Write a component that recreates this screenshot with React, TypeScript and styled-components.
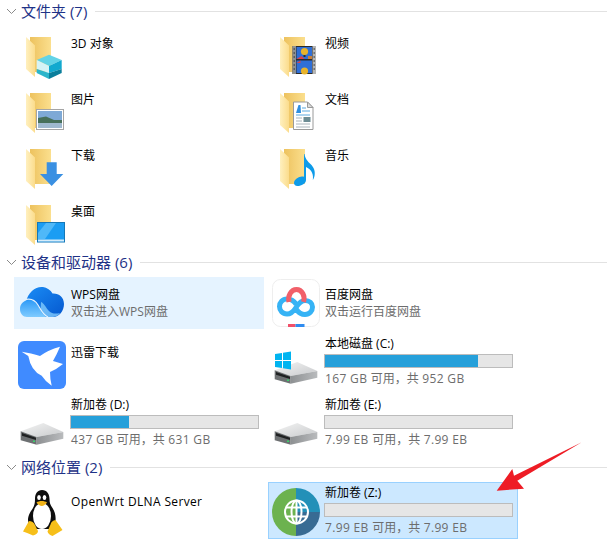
import React from 'react';
import styled, { createGlobalStyle } from 'styled-components';

const GlobalStyle = createGlobalStyle`
  html, body {
    margin: 0;
    padding: 0;
    background: #fff;
  }
  body {
    font-family: "Open Sans", "Noto Sans CJK SC", sans-serif;
    font-size: 12px;
    color: #000;
    overflow: hidden;
  }
`;

/* ------------------------------ Folder icons ------------------------------ */
const FolderBase = () => (
  <>
    <defs>
      <linearGradient id="back" x1="0" y1="0" x2="1" y2="0">
        <stop offset="0" stopColor="#edc25e" />
        <stop offset="1" stopColor="#fbdf8e" />
      </linearGradient>
      <linearGradient id="flap" x1="0" y1="0" x2="1" y2="0">
        <stop offset="0" stopColor="#fff0bf" />
        <stop offset="1" stopColor="#fbdc8c" />
      </linearGradient>
    </defs>
    <rect x="12" y="4" width="21" height="35" fill="url(#back)" />
    <polygon points="8,4 17,12.5 17,44 8,36" fill="url(#flap)" />
  </>
);

const Cube = () => (
  <>
    <polygon points="31,21.7 43.7,27 31,33 18.7,27" fill="#62d3e6" />
    <polygon points="18.7,27 31,33 31,40 18.7,36" fill="#d5f3f6" />
    <polygon points="18.7,36 31,40 31,46 18.7,40" fill="#2bb5cb" />
    <polygon points="31,33 43.7,27 43.7,36 31,40" fill="#12a9cf" />
    <polygon points="31,40 43.7,36 43.7,40 31,46" fill="#0b7f9c" />
  </>
);

const Film = () => (
  <>
    <rect x="20.5" y="13" width="23.5" height="28" fill="#2b2b2b" />
    <rect x="20.5" y="13" width="3.5" height="28" fill="#8f9191" />
    <rect x="40.5" y="13" width="3.5" height="28" fill="#b5b6b6" />
    <path d="M21.5 16h1.500M21.5 20h1.500M21.5 24h1.500M21.5 28h1.500M21.5 32h1.500M21.5 36h1.500M41.5 16h1.500M41.5 20h1.500M41.5 24h1.500M41.5 28h1.500M41.5 32h1.500M41.5 36h1.500" stroke="#2b2b2b" />
    <rect x="24.5" y="14" width="15.5" height="12" fill="#2f6fd6" />
    <rect x="24.5" y="27.5" width="15.5" height="12.5" fill="#2f6fd6" />
    <circle cx="32.5" cy="18.500" r="3.600" fill="#e8b32a" />
    <rect x="31.5" y="22" width="2" height="2" fill="#2b2b2b" />
    <circle cx="32.5" cy="38" r="3.600" fill="#e8b32a" />
    <path d="M24.500 26l5-3 3 3zM24.500 30l4-2.500v2.500z" fill="#d8424a" />
    <rect x="36" y="23" width="4" height="3" fill="#c9803a" />
  </>
);

const Picture = () => (
  <>
    <rect x="18.5" y="20.5" width="27" height="20" fill="#fff" stroke="#a5a5a5" />
    <rect x="20" y="22" width="24" height="17" fill="#7ea9d6" />
    <polygon points="20,29 28,27.5 36,31 44,31 44,34 20,34" fill="#47705a" />
    <rect x="20" y="34" width="24" height="5" fill="#9fb9cf" />
  </>
);

const Doc = () => (
  <>
    <polygon points="21.5,13 35.5,13 41,18.5 41,40.5 21.5,40.5" fill="#fff" stroke="#9a9a9a" />
    <polygon points="35.5,13 35.5,18.5 41,18.5" fill="#dcdcdc" stroke="#9a9a9a" />
    <polygon points="24,24 26.5,16 28.5,16 29,24" fill="#2f8fe0" />
    <path d="M30 19h4M30 22h8M24 26h14" stroke="#5aa9e0" fill="none" />
    <path d="M24 29h6M24 32h6M24 35h14M24 38h14" stroke="#aab4bc" fill="none" />
    <rect x="31.5" y="28" width="7" height="5" fill="#6d8c94" />
  </>
);

const Note = () => (
  <path
    d="M30 9h2.5c.8 5 3 7 6 10 3.500 3.500 5 7 4 12-.3 1.500-1 3-1.700 4 .8-5-.5-10-6.800-13V35c0 3.500-4.500 6-8.500 6-2.500 0-3.500-1.500-3.500-3 0-3.500 4.500-6.500 8-6.500.8 0 1.500.1 2 .3V9z"
    fill="#0d9be9"
  />
);

const DownArrow = () => (
  <polygon
    points="28.700,17.300 38.700,17.300 38.700,29 45.300,29 33.700,41 22,29 28.700,29"
    fill="#3a90e2"
  />
);

const Desktop = () => (
  <>
    <rect x="19.500" y="21.500" width="27" height="19.500" fill="#1b9df3" stroke="#1578b8" />
    <polygon points="28,22 38,22 27,38 20,38 20,32" fill="#4fb8f8" />
    <rect x="20" y="38.500" width="26" height="2" fill="#d6ecfa" />
  </>
);

/* ------------------------------ Device icons ------------------------------ */
const WpsIcon = () => (
  <svg width="48" height="48" viewBox="0 0 48 48">
    <defs>
      <linearGradient id="wpsBack" x1="0" y1="0" x2="1" y2="1">
        <stop offset="0" stopColor="#1a8cf5" />
        <stop offset="1" stopColor="#0558cf" />
      </linearGradient>
      <linearGradient id="wpsFront" x1="0" y1="0" x2="0" y2="1">
        <stop offset="0" stopColor="#2f9bf7" />
        <stop offset="1" stopColor="#7fcbff" />
      </linearGradient>
    </defs>
    <path
      d="M8 23C10 13 18 7 25 8c4 .5 7.500 3 9.500 6.500 6-.5 11.500 3.500 11.500 10.500 0 7-5 13-11 13H22C20 30 14 24 8 23z"
      fill="url(#wpsBack)"
    />
    <path
      d="M2 30c0-6 5-9.500 10-9 5 .5 8 5 10.500 10 1.500 3 3.500 5.500 6 7H9c-4 0-7-3.500-7-8z"
      fill="url(#wpsFront)"
    />
    <path d="M22.500 31C25 36 27.500 38 30 38h5c4-1 6-2 7-4-4 1-8 1-11-2-3-3-5-8-8-9z" fill="#8ad2ff" opacity="0.75" />
    <path d="M6 21c6-2 11 0 14 5 2.500 4 5 10 10 12" stroke="#e3f3ff" strokeWidth="1.200" fill="none" />
  </svg>
);

const XunleiIcon = () => (
  <svg width="48" height="48" viewBox="0 0 48 48">
    <rect width="48" height="48" rx="6" fill="#408bff" />
    <path
      d="M3.700 10.700L13 12.500Q18 13.500 22 15Q30 9 42 5.700Q39 13 35 20L45 23Q39 28 32 31Q32 38 33.700 44.700Q27 40 23.700 34.700Q13 30 10.300 15Z"
      fill="#fff"
    />
  </svg>
);

const BaiduIcon = () => (
  <svg width="48" height="48" viewBox="0 0 48 48">
    <rect x="0.500" y="0.500" width="47" height="47" rx="8" fill="#fff" stroke="#eeeeee" />
    <g fill="none" strokeWidth="5">
      <path d="M24 25c-2-3-5-5-9-5-4.500 0-7.500 3.500-7.500 7.500s3 7.500 7.500 7.500c5 0 8-5 9-6.500 1.500-2 4-7 9-7 4.500 0 7.500 3 7.500 6.500 0 4-3 7.500-7.500 7.500-3.500 0-6.500-2-8.500-5" stroke="#36b3f5" />
      <path d="M17 23c-1.500-6 2-12.500 7.500-12.500S33.500 17 31.500 23" stroke="#f1606a" />
    </g>
    <rect x="16" y="45" width="7.500" height="3" fill="#f1506a" />
    <rect x="23.500" y="45" width="9" height="3" fill="#2e8cf0" />
  </svg>
);

const Hdd = () => (
  <g>
    <defs>
      <linearGradient id="hddTop" x1="0" y1="0" x2="1" y2="1">
        <stop offset="0" stopColor="#f4f4f4" />
        <stop offset="1" stopColor="#c8cacc" />
      </linearGradient>
      <linearGradient id="hddSide" x1="0" y1="0" x2="1" y2="0">
        <stop offset="0" stopColor="#8d9092" />
        <stop offset="1" stopColor="#b9bbbd" />
      </linearGradient>
    </defs>
    <polygon points="2.700,31.300 25.300,23 45.300,32 18.700,37" fill="url(#hddTop)" />
    <polygon points="2.700,31.300 18.700,37 18.700,44.700 2.700,40.300" fill="#6d7072" />
    <polygon points="4,33 18,37.800 18,40 4,35.800" fill="#1f2122" />
    <polygon points="18.700,37 45.300,32 45.300,38.700 18.700,44.700" fill="url(#hddSide)" />
    <rect x="15" y="40.500" width="2" height="1.500" fill="#38d46a" />
  </g>
);

const DriveIcon = ({ system }: { system?: boolean }) => (
  <svg width="48" height="48" viewBox="0 0 48 48">
    <Hdd />
    {system && (
      <path d="M3 15l7-1v7H3zM11 13.800l8-1.300V21h-8zM3 22h7v7l-7-1zM11 22h8v8.500l-8-1.300z" fill="#00b4f0" />
    )}
  </svg>
);

const PenguinIcon = () => (
  <svg width="48" height="48" viewBox="0 0 48 48">
    <path
      d="M24 0c5 0 7.500 4 7.500 9 0 4 1 6 3 9 2.500 4 3.500 8 3 13-.3 3-2 6-4 8H14c-2-2-4-5-4-9 0-5 3-9 5-12 1.500-2.500 2-5 2-9 0-5.500 2.500-9 7-9z"
      fill="#0e0e0e"
    />
    <ellipse cx="24" cy="26" rx="9" ry="13" fill="#fff" />
    <ellipse cx="21" cy="7.500" rx="1.800" ry="2.500" fill="#fff" />
    <ellipse cx="26.500" cy="7.500" rx="1.800" ry="2.500" fill="#fff" />
    <path d="M18.500 12.500c2.500-2 8-2 10.500 0-1.500 2-3.500 3.500-5.200 3.500-1.800 0-3.800-1.500-5.300-3.500z" fill="#f2b418" />
    <path d="M5 41.500L11 31c2.500 0 5 1.500 6 4l3 6c0 2-2 3.500-5 4.500-3-1.500-6-2.500-10-4z" fill="#f6bf1a" />
    <path d="M44.500 40L37.500 30c-2.500.5-4.500 2-5 4.500l-3 7c.5 2 2.500 3.500 5 4.500 3.500-2 6.500-4 10-6z" fill="#f6bf1a" />
  </svg>
);

const GlobeIcon = () => (
  <svg width="48" height="48" viewBox="0 0 48 48">
    <path d="M24 0a24 24 0 0 0 0 48z" fill="#6cb24f" />
    <path d="M24 0a24 24 0 0 1 24 24H24z" fill="#2390b8" />
    <path d="M24 48a24 24 0 0 0 24-24H24z" fill="#386b93" />
    <g fill="none" stroke="#fff" strokeWidth="2">
      <circle cx="24.500" cy="24" r="11.500" />
      <ellipse cx="24.500" cy="24" rx="5" ry="11.500" />
      <path d="M14 19.500h21M14 28.500h21M24.500 12.500v23" />
    </g>
  </svg>
);

/* -------------------------------- Data -------------------------------- */
const folders = [
  { name: '3D 对象', badge: <Cube /> },
  { name: '视频', badge: <Film /> },
  { name: '图片', badge: <Picture /> },
  { name: '文档', badge: <Doc /> },
  { name: '下载', badge: <DownArrow /> },
  { name: '音乐', badge: <Note /> },
  { name: '桌面', badge: <Desktop /> },
];

// latin runs are set a little wider than the CJK around them
const spaced = (text: string) =>
  text.split(/([\x20-\x7e]+)/).map((part, i) =>
    i % 2 ? <Latin key={i}>{part}</Latin> : part,
  );

const App = () => (
  <>
    <GlobalStyle />
    <Page>
      <Group title="文件夹 (7)">
        {folders.map((f) => (
          <Tile key={f.name} $pad={9}>
            <IconBox>
              <svg width="48" height="48" viewBox="0 0 48 48">
                <FolderBase />
                {f.badge}
              </svg>
            </IconBox>
            <Info>
              <Name>{f.name}</Name>
            </Info>
          </Tile>
        ))}
      </Group>

      <Group title="设备和驱动器 (6)">
        <Tile $state="hover" $center>
          <IconBox><WpsIcon /></IconBox>
          <Info>
            <Name>WPS网盘</Name>
            <Sub $tight>双击进入WPS网盘</Sub>
          </Info>
        </Tile>
        <Tile $center>
          <IconBox><BaiduIcon /></IconBox>
          <Info>
            <Name>百度网盘</Name>
            <Sub $tight>双击运行百度网盘</Sub>
          </Info>
        </Tile>
        <Tile $pad={11}>
          <IconBox><XunleiIcon /></IconBox>
          <Info>
            <Name>迅雷下载</Name>
          </Info>
        </Tile>
        <Drive name="本地磁盘 (C:)" used={82} free="167 GB 可用，共 952 GB" icon={<DriveIcon system />} />
        <Drive name="新加卷 (D:)" used={31} free="437 GB 可用，共 631 GB" icon={<DriveIcon />} />
        <Drive name="新加卷 (E:)" used={0} free="7.99 EB 可用，共 7.99 EB" icon={<DriveIcon />} />
      </Group>

      <Group title="网络位置 (2)">
        <Tile $pad={11}>
          <IconBox><PenguinIcon /></IconBox>
          <Info>
            <Name>{spaced('OpenWrt DLNA Server')}</Name>
          </Info>
        </Tile>
        <Drive name="新加卷 (Z:)" used={0} free="7.99 EB 可用，共 7.99 EB" icon={<GlobeIcon />} selected />
      </Group>

      <Callout width="100" height="60" viewBox="0 0 100 60">
        <polygon points="91.700,6.300 24,39.700 22.300,33 6.700,54.700 34,52.700 27.300,44.700" fill="#ee1c25" />
      </Callout>
    </Page>
  </>
);

const Group = ({ title, children }: { title: string; children: React.ReactNode }) => (
  <Section>
    <Header>
      <svg width="9" height="5" viewBox="0 0 9 5">
        <polyline points="0,0 4.500,4.500 9,0" fill="none" stroke="#8a8a8a" />
      </svg>
      <Title>{title}</Title>
      <Rule />
    </Header>
    <Grid>{children}</Grid>
  </Section>
);

type DriveProps = {
  name: string;
  used: number;
  free: string;
  icon: React.ReactNode;
  selected?: boolean;
};

const Drive = ({ name, used, free, icon, selected }: DriveProps) => (
  <Tile $state={selected ? 'selected' : undefined} $drive $pad={2}>
    <IconBox>{icon}</IconBox>
    <Info>
      <Name>{name}</Name>
      <Meter>
        <MeterFill style={{ width: `${used}%` }} />
      </Meter>
      <Sub>{spaced(free)}</Sub>
    </Info>
  </Tile>
);

const Page = styled.div`
  position: relative;
  width: 615px;
  height: 542px;
  padding-top: 3px;
  box-sizing: border-box;
  overflow: hidden;
`;

const Section = styled.section`
  margin-bottom: 8px;
`;

const Header = styled.header`
  display: flex;
  align-items: center;
  height: 16px;
  padding-left: 7px;
  width: 607px;
  box-sizing: border-box;
`;

const Title = styled.h2`
  margin: 0 8px 0 5px;
  font-size: 15px;
  font-weight: 400;
  line-height: 16px;
  color: #1e3287;
  white-space: nowrap;
`;

const Rule = styled.div`
  flex: 1;
  height: 1px;
  background: #e2e2e2;
`;

const Grid = styled.div`
  display: grid;
  grid-template-columns: 250px 250px;
  column-gap: 4px;
  row-gap: 4px;
  padding: 7px 0 0 14px;
`;

const Tile = styled.div<{ $state?: 'hover' | 'selected'; $center?: boolean; $pad?: number; $drive?: boolean }>`
  display: flex;
  gap: 5px;
  height: ${(p) => (p.$drive ? 57 : 52)}px;
  box-sizing: border-box;
  padding: ${(p) => p.$pad ?? 0}px 0 0 3px;
  align-items: ${(p) => (p.$center ? 'center' : 'flex-start')};
  border: 1px solid ${(p) => (p.$state === 'selected' ? '#99d1ff' : 'transparent')};
  background: ${(p) =>
    p.$state === 'selected' ? '#cce8ff' : p.$state === 'hover' ? '#e5f3ff' : 'transparent'};
`;

const IconBox = styled.div`
  width: 48px;
  height: 48px;
  flex: none;
  align-self: center;
  svg {
    display: block;
  }
`;

const Info = styled.div`
  min-width: 0;
  flex: 1;
`;

const Name = styled.div`
  line-height: 16px;
  white-space: nowrap;
`;

const Latin = styled.span`
  letter-spacing: 0.35px;
`;

const Sub = styled.div<{ $tight?: boolean }>`
  margin-top: ${(p) => (p.$tight ? 1 : 3)}px;
  line-height: 16px;
  color: #6d6d6d;
  white-space: nowrap;
`;

const Meter = styled.div`
  width: 189px;
  height: 14px;
  margin: 2px 0 0 -1px;
  box-sizing: border-box;
  border: 1px solid #bcbcbc;
  background: #e6e6e6;
`;

const MeterFill = styled.div`
  height: 100%;
  background: #26a0da;
`;

const Callout = styled.svg`
  position: absolute;
  left: 490px;
  top: 436px;
`;

export default App;
